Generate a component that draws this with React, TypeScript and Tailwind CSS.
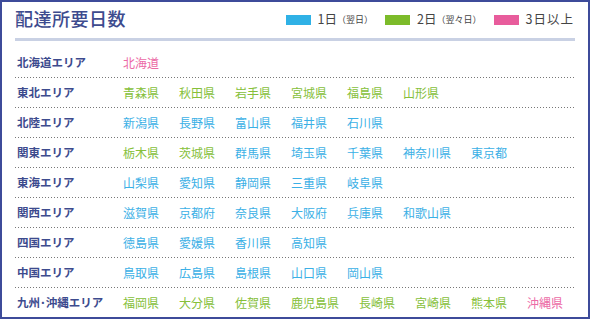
import React from 'react';

type Pref = { name: string; days: 1 | 2 | 3 };

const areas: { label: string; prefs: Pref[] }[] = [
  { label: '北海道エリア', prefs: [{ name: '北海道', days: 3 }] },
  {
    label: '東北エリア',
    prefs: ['青森県', '秋田県', '岩手県', '宮城県', '福島県', '山形県'].map((name) => ({ name, days: 2 as const })),
  },
  {
    label: '北陸エリア',
    prefs: ['新潟県', '長野県', '富山県', '福井県', '石川県'].map((name) => ({ name, days: 1 as const })),
  },
  {
    label: '関東エリア',
    prefs: [
      { name: '栃木県', days: 2 },
      { name: '茨城県', days: 2 },
      { name: '群馬県', days: 1 },
      { name: '埼玉県', days: 1 },
      { name: '千葉県', days: 1 },
      { name: '神奈川県', days: 1 },
      { name: '東京都', days: 1 },
    ],
  },
  {
    label: '東海エリア',
    prefs: ['山梨県', '愛知県', '静岡県', '三重県', '岐阜県'].map((name) => ({ name, days: 1 as const })),
  },
  {
    label: '関西エリア',
    prefs: ['滋賀県', '京都府', '奈良県', '大阪府', '兵庫県', '和歌山県'].map((name) => ({ name, days: 1 as const })),
  },
  {
    label: '四国エリア',
    prefs: ['徳島県', '愛媛県', '香川県', '高知県'].map((name) => ({ name, days: 1 as const })),
  },
  {
    label: '中国エリア',
    prefs: ['鳥取県', '広島県', '島根県', '山口県', '岡山県'].map((name) => ({ name, days: 1 as const })),
  },
  {
    label: '九州･沖縄エリア',
    prefs: [
      { name: '福岡県', days: 2 },
      { name: '大分県', days: 2 },
      { name: '佐賀県', days: 2 },
      { name: '鹿児島県', days: 2 },
      { name: '長崎県', days: 2 },
      { name: '宮崎県', days: 2 },
      { name: '熊本県', days: 2 },
      { name: '沖縄県', days: 3 },
    ],
  },
];

const dayColor = {
  1: 'text-[#3bb0e6]',
  2: 'text-[#86c03a]',
  3: 'text-[#ec6aa6]',
};

const font = { fontFamily: '"Noto Sans CJK JP", "Noto Sans", sans-serif' };

export default function App() {
  return (
    <div className="w-[592px] h-[320px] bg-white" style={font}>
      <div className="w-[590px] h-[319px] border-2 border-[#3d4b9a] px-[13px] pt-[3px]">
        <div className="flex items-end justify-between pb-[7px] border-b-[3px] border-[#c9d1e4]">
          <h1 className="text-[18px] leading-[26px] font-medium text-[#3d4b8e] tracking-[0.5px]">配達所要日数</h1>
          <div className="flex items-center text-[12.5px] text-[#444] pb-[2px] pr-[1px]">
            <span className="w-[25px] h-[10px] bg-[#2fb1e6] mr-[7px]" />
            <span className="flex items-center">1日<span className="text-[9px]">（翌日）</span></span>
            <span className="w-[25px] h-[10px] bg-[#7cbb2a] ml-[12px] mr-[7px]" />
            <span className="flex items-center">2日<span className="text-[9px]">（翌々日）</span></span>
            <span className="w-[25px] h-[10px] bg-[#e85c9c] ml-[12px] mr-[7px]" />
            <span className="tracking-[1px]">3日以上</span>
          </div>
        </div>
        <div className="pt-[7px]">
          {areas.map((area, i) => (
            <div key={area.label}>
              <div className="flex items-center h-[29px]">
                <div className="w-[108px] pl-[2px] text-[11.5px] font-bold text-[#3d4b8e]">{area.label}</div>
                <div className="flex gap-[20px] text-[12px]">
                  {area.prefs.map((p) => (
                    <span key={p.name} className={dayColor[p.days]}>
                      {p.name}
                    </span>
                  ))}
                </div>
              </div>
              {i < areas.length - 1 && (
                <div className="h-px bg-[linear-gradient(to_right,#777_1px,transparent_1px)] bg-[length:3px_1px] bg-repeat-x" />
              )}
            </div>
          ))}
        </div>
      </div>
    </div>
  );
}
